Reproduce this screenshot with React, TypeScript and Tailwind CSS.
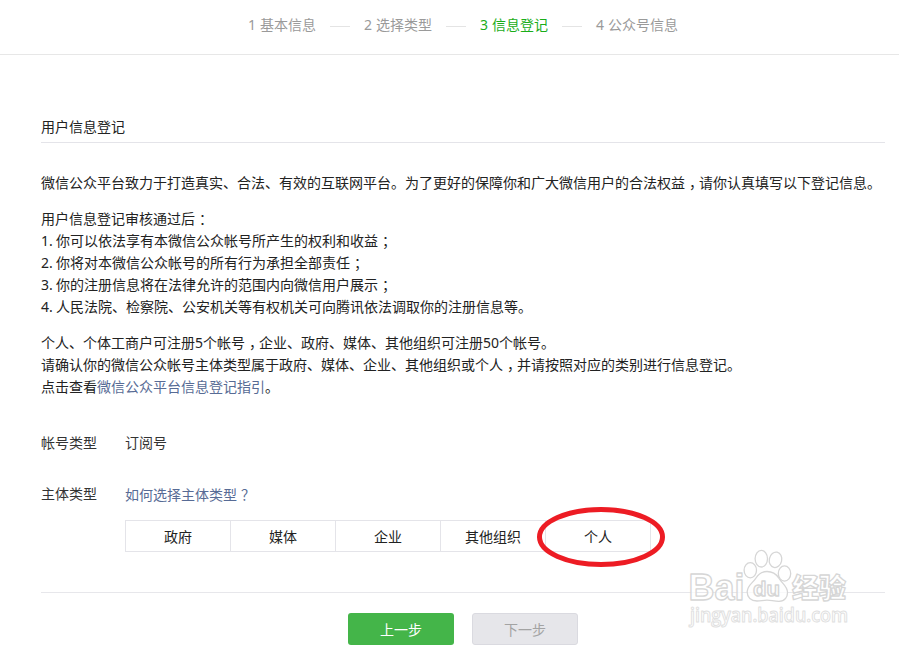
import { Fragment } from "react";
import clsx from "clsx";

const steps = ["基本信息", "选择类型", "信息登记", "公众号信息"];
const subjectTypes = ["政府", "媒体", "企业", "其他组织", "个人"];
const rules = [
  "你可以依法享有本微信公众帐号所产生的权利和收益；",
  "你将对本微信公众帐号的所有行为承担全部责任；",
  "你的注册信息将在法律允许的范围内向微信用户展示；",
  "人民法院、检察院、公安机关等有权机关可向腾讯依法调取你的注册信息等。",
];

// colon, semicolon and comma sit closer to the middle of their cell
function Text({ children }: { children: string }) {
  return (
    <>
      {children.split(/([：；，？])/).map((part, i) =>
        i % 2 ? (
          <span key={i} className="inline-block h-[22px] w-[14px] pl-[4px] align-top [font-feature-settings:'halt']">{part}</span>
        ) : part
      )}
    </>
  );
}

function Steps({ current }: { current: number }) {
  return (
    <div className="flex h-[55px] items-center border-b border-[#e7e7e7] pl-[248px] pb-[5px]">
      {steps.map((step, i) => (
        <Fragment key={step}>
          {i > 0 && <span className="mx-[14px] mt-[3px] h-px w-5 bg-[#e4e4e4]" />}
          <span className={clsx("flex", i === current ? "text-[#1aad19]" : "text-[#9a9a9a]")}>
            <span className="w-3">{i + 1}</span>
            {step}
          </span>
        </Fragment>
      ))}
    </div>
  );
}

function Watermark() {
  return (
    <svg
      className="pointer-events-none absolute left-[680px] top-[540px]"
      width="200"
      height="107"
      viewBox="0 0 200 107"
      fill="#fff"
      fillOpacity="0.75"
      stroke="#d6d6d6"
      strokeWidth="1.3"
      strokeLinejoin="round"
      fontFamily="'Liberation Sans', 'Noto Sans CJK SC', sans-serif"
      fontWeight="700"
    >
      <text x="8.500" y="60" fontSize="36" textLength="56" lengthAdjust="spacingAndGlyphs">Bai</text>
      <ellipse cx="70.3" cy="30.3" rx="6.2" ry="7.6" />
      <ellipse cx="81.3" cy="18.7" rx="6.2" ry="8.3" />
      <ellipse cx="95.5" cy="19.8" rx="6.2" ry="7.8" transform="rotate(12 95.5 19.8)" />
      <ellipse cx="104.5" cy="33.5" rx="6.2" ry="7.6" />
      <path d="M87 31.500c-5 0-8.500 2.500-11 6.500-2.500 4.500-8.500 7-8.800 13.500C67 57.500 71 61 77 61c4 0 6-.8 10-.8S94 61.300 99 61.300c6 0 8.800-4.800 8.500-9.300-.3-6-5.500-8.500-8.800-14-2.500-4-6.500-6.500-11.700-6.500z" />
      <text x="73" y="56" fontSize="20" textLength="27" lengthAdjust="spacingAndGlyphs">du</text>
      <text x="112" y="58" fontSize="27" textLength="54" lengthAdjust="spacingAndGlyphs" fontWeight="900">经验</text>
      <text x="10" y="82" fontSize="19" textLength="158" lengthAdjust="spacingAndGlyphs" fontFamily="'Open Sans', sans-serif" fontWeight="600" stroke="#e0e0e0" strokeWidth="1">
        jingyan.baidu.com
      </text>
    </svg>
  );
}

export default function App() {
  return (
    <div
      lang="zh-CN"
      className="relative h-[647px] w-[899px] overflow-hidden bg-white font-['Noto_Sans','Noto_Sans_CJK_SC',sans-serif] text-[14px] leading-[22px] text-[#222]"
    >
      <Steps current={2} />

      <main className="mr-[14px] ml-[41px]">
        <h2 className="mt-[61px] h-[27px] border-b border-[#e4e4e9]">用户信息登记</h2>

        <div className="mt-[29px] flex flex-col gap-[14px] whitespace-nowrap">
          <p className="h-[22px]"><Text>微信公众平台致力于打造真实、合法、有效的互联网平台。为了更好的保障你和广大微信用户的合法权益，请你认真填写以下登记信息。</Text></p>
          <div>
            <p className="h-[22px]"><Text>用户信息登记审核通过后：</Text></p>
            <ol>
              {rules.map((rule, i) => (
                <li key={rule} className="flex h-[22px]">
                  <span className="w-[15px]">{i + 1}.</span>
                  <span><Text>{rule}</Text></span>
                </li>
              ))}
            </ol>
          </div>
          <div>
            <p className="h-[22px]">
              <Text>个人、个体工商户可注册</Text><span className="inline-block w-[8px]">5</span>
              <Text>个帐号，企业、政府、媒体、其他组织可注册</Text><span className="inline-block w-[16px]">50</span>个帐号。
            </p>
            <p className="h-[22px]"><Text>请确认你的微信公众帐号主体类型属于政府、媒体、企业、其他组织或个人，并请按照对应的类别进行信息登记。</Text></p>
            <p className="h-[22px]">点击查看<a href="#" className="text-[#576b95]">微信公众平台信息登记指引</a>。</p>
          </div>
        </div>

        <div className="mt-[34px] flex h-[22px] text-[#333]">
          <span className="w-[84px]">帐号类型</span>
          <span>订阅号</span>
        </div>

        <div className="mt-[29px] flex">
          <span className="w-[84px] text-[#333]">主体类型</span>
          <div>
            <a href="#" className="block h-[23px] pt-px text-[#576b95]"><Text>如何选择主体类型？</Text></a>
            <div className="mt-[14px] flex h-8 border border-[#e4e4e9]">
              {subjectTypes.map((type, i) => (
                <button
                  key={type}
                  className={clsx("relative flex items-center justify-center border-[#e4e4e9] pt-[2px]", i ? "w-[105px] border-l" : "w-[104px]")}
                >
                  {type}
                  {type === "个人" && (
                    <svg className="absolute -top-[15px] -left-[10px] h-[62px] w-[130px] max-w-none" viewBox="0 0 130 62" fill="none">
                      <ellipse cx="65" cy="31" rx="61.500" ry="27.500" stroke="#ed1c24" strokeWidth="5" />
                    </svg>
                  )}
                </button>
              ))}
            </div>
          </div>
        </div>

        <div className="mt-10 flex gap-[18px] border-t border-[#e7e7eb] pt-5 pl-[307px]">
          <button className="h-8 w-[106px] rounded-[3px] bg-[#44b549] pt-[2px] text-white">上一步</button>
          <button className="h-8 w-[106px] rounded-[3px] border border-[#dadae0] bg-[#e6e6ea] pt-[2px] text-[#a3a3a3]">下一步</button>
        </div>
      </main>

      <Watermark />
    </div>
  );
}
